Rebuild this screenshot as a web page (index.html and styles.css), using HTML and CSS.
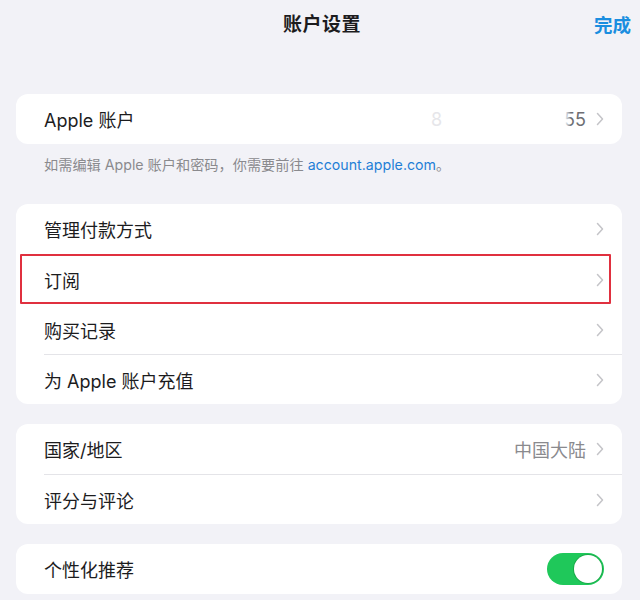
FILE: index.html
```html
<!DOCTYPE html>
<html lang="zh-CN">
<head>
    <meta charset="UTF-8">
    <meta name="viewport" content="width=device-width, initial-scale=1.0">
    <title>账户设置</title>
    <link rel="stylesheet" href="styles.css">
</head>
<body>
    <div class="sheet">
        <header class="nav-bar">
            <h1>账户设置</h1>
            <a class="done" href="#">完成</a>
        </header>

        <section class="group first">
            <div class="card">
                <div class="row">
                    <span class="label">Apple 账户</span>
                    <span class="value masked">
                        <span class="faint">8</span><span class="gap"></span><span class="tail">55</span>
                    </span>
                    <svg class="chevron" viewBox="0 0 8 14"><path d="M1.5 1.5 L6.5 7 L1.5 12.5"/></svg>
                </div>
            </div>
            <p class="footnote">如需编辑 Apple 账户和密码，你需要前往 <a href="#">account.apple.com</a>。</p>
        </section>

        <section class="group">
            <div class="card">
                <div class="row">
                    <span class="label">管理付款方式</span>
                    <svg class="chevron" viewBox="0 0 8 14"><path d="M1.5 1.5 L6.5 7 L1.5 12.5"/></svg>
                </div>
                <div class="row marked">
                    <span class="label">订阅</span>
                    <svg class="chevron" viewBox="0 0 8 14"><path d="M1.5 1.5 L6.5 7 L1.5 12.5"/></svg>
                </div>
                <div class="row">
                    <span class="label">购买记录</span>
                    <svg class="chevron" viewBox="0 0 8 14"><path d="M1.5 1.5 L6.5 7 L1.5 12.5"/></svg>
                </div>
                <div class="row">
                    <span class="label">为 Apple 账户充值</span>
                    <svg class="chevron" viewBox="0 0 8 14"><path d="M1.5 1.5 L6.5 7 L1.5 12.5"/></svg>
                </div>
            </div>
        </section>

        <section class="group">
            <div class="card">
                <div class="row">
                    <span class="label">国家/地区</span>
                    <span class="value">中国大陆</span>
                    <svg class="chevron" viewBox="0 0 8 14"><path d="M1.5 1.5 L6.5 7 L1.5 12.5"/></svg>
                </div>
                <div class="row">
                    <span class="label">评分与评论</span>
                    <svg class="chevron" viewBox="0 0 8 14"><path d="M1.5 1.5 L6.5 7 L1.5 12.5"/></svg>
                </div>
            </div>
        </section>

        <section class="group">
            <div class="card">
                <div class="row">
                    <span class="label">个性化推荐</span>
                    <span class="switch on"><span class="knob"></span></span>
                </div>
            </div>
        </section>
    </div>
</body>
</html>
```

FILE: styles.css
```css
* {
    margin: 0;
    padding: 0;
    box-sizing: border-box;
}

body {
    background: #f2f2f7;
    font-family: Inter, "Noto Sans CJK SC", sans-serif;
    color: #1c1c1e;
    overflow: hidden;
}

.sheet {
    padding: 0 18px 0 16px;
}

/* top bar */
.nav-bar {
    height: 44px;
    display: flex;
    align-items: center;
    justify-content: center;
    position: relative;
}

.nav-bar h1 {
    font-size: 19px;
    font-weight: 600;
    letter-spacing: 0.5px;
    margin-left: 6px;
}

.done {
    position: absolute;
    right: -9px;
    top: 11px;
    font-size: 18.5px;
    font-weight: 700;
    color: #1a8ee0;
    text-decoration: none;
}

/* grouped list */
.group {
    margin-top: 20px;
}

.group.first {
    margin-top: 50px;
    margin-bottom: 30px;
}

.card {
    background: #fff;
    border-radius: 12px;
    padding-left: 28px;
}

.row {
    height: 50px;
    display: flex;
    align-items: center;
    padding-right: 16px;
    font-size: 18px;
    position: relative;
}

.row + .row {
    border-top: 1px solid #e4e4e8;
}

.label {
    flex: 1;
    white-space: nowrap;
}

.value {
    color: #8a8a8e;
    margin-right: 10px;
}

.masked {
    display: flex;
    align-items: center;
}

.masked .faint {
    color: #e6e6ea;
}

.masked .gap {
    width: 122px;
}

.masked .tail {
    color: #6e6e73;
    position: relative;
}

.masked .tail::before {
    content: "";
    position: absolute;
    left: -4px;
    top: 0;
    bottom: 0;
    width: 11px;
    background: linear-gradient(90deg, #fff 45%, rgba(255, 255, 255, 0));
}

.chevron {
    width: 8px;
    height: 14px;
    margin-right: 2px;
    fill: none;
    stroke: #c4c4c8;
    stroke-width: 1.5;
    stroke-linecap: round;
    stroke-linejoin: round;
}

/* highlight frame around the subscriptions row */
.row.marked,
.row.marked + .row {
    border-top-color: transparent;
}

.row.marked::before {
    content: "";
    position: absolute;
    left: -24px;
    right: 11px;
    top: -1px;
    bottom: 0;
    border: 2px solid #e0303f;
    border-radius: 1px;
}

.footnote {
    padding: 12px 28px 0;
    font-size: 14.2px;
    line-height: 18px;
    color: #8a8a8e;
}

.footnote a {
    color: #1f7fd6;
    text-decoration: none;
}

/* toggle */
.switch {
    width: 57px;
    height: 32px;
    margin-right: 2px;
    border-radius: 16px;
    background: #e5e5ea;
    display: flex;
    align-items: center;
    padding: 2px;
}

.switch.on {
    background: #1fc85a;
    justify-content: flex-end;
}

.knob {
    width: 28px;
    height: 28px;
    border-radius: 50%;
    background: #fff;
    box-shadow: 0 0 0 1px rgba(20, 150, 60, 0.6);
}
```
